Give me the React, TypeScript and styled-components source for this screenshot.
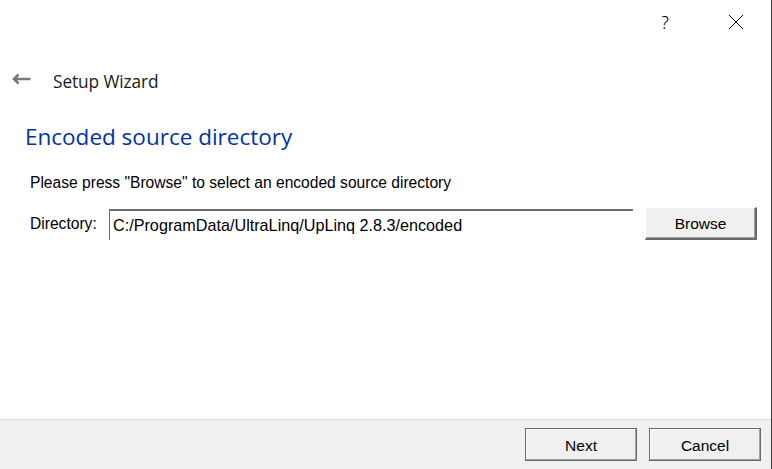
import { useState } from "react";
import styled, { createGlobalStyle } from "styled-components";

const GlobalStyle = createGlobalStyle`
  html, body {
    margin: 0;
    padding: 0;
    background: #ffffff;
  }
  * {
    box-sizing: border-box;
  }
`;

const uiFont = `"Liberation Sans", Arial, sans-serif`;

const Window = styled.div`
  width: 772px;
  height: 469px;
  display: flex;
  flex-direction: column;
  background: #ffffff;
  border-right: 1px solid #3c3c3c;
  overflow: hidden;
`;

const TitleBar = styled.div`
  height: 44px;
  display: flex;
  justify-content: flex-end;
  align-items: center;
  padding-right: 12px;
`;

const CaptionButton = styled.button<{ $gap?: number }>`
  width: 46px;
  height: 44px;
  margin-left: ${({ $gap }) => $gap ?? 0}px;
  border: none;
  background: transparent;
  display: flex;
  align-items: center;
  justify-content: center;
  padding: 0;
  font-family: "Noto Sans", sans-serif;
  font-weight: 300;
  font-size: 18px;
  color: #000000;
`;

const Header = styled.div`
  height: 70px;
  display: flex;
  align-items: center;
  padding: 4px 0 0 11px;
  gap: 22px;
`;

const ArrowBox = styled.span`
  display: flex;
  margin-bottom: 5px;
`;

const HeaderTitle = styled.span`
  font-family: "Open Sans", sans-serif;
  font-size: 17.3px;
  color: #1a1a1a;
  letter-spacing: -0.1px;
`;

const Content = styled.div`
  flex: 1;
  padding: 0 14px 0 25px;
`;

const PageTitle = styled.h1`
  margin: 0;
  font-family: "Open Sans", sans-serif;
  font-weight: 400;
  font-size: 22.5px;
  line-height: 46px;
  color: #0033a8;
`;

const Description = styled.p`
  margin: 15px 0 0 5px;
  font-family: ${uiFont};
  font-size: 15.6px;
  line-height: 16px;
  color: #000000;
`;

const FieldRow = styled.div`
  display: flex;
  align-items: center;
  margin: 16px 0 0 5px;
`;

const FieldLabel = styled.label`
  width: 79px;
  font-family: ${uiFont};
  font-size: 15.6px;
  color: #000000;
`;

const PathInput = styled.input`
  width: 524px;
  height: 31px;
  margin-top: 2px;
  border-style: solid;
  border-width: 2px 0 0 1px;
  border-color: #6d6d6d;
  padding: 0 0 0 3px;
  font-family: ${uiFont};
  font-size: 16.2px;
  color: #000000;
  background: #ffffff;
  outline: none;
`;

const ClassicButton = styled.button<{ $width?: number }>`
  width: ${({ $width }) => $width ?? 112}px;
  height: 33px;
  background: #f0f0f0;
  border-style: solid;
  border-width: 1px 2px 2px 1px;
  border-color: #ffffff #696969 #696969 #ffffff;
  box-shadow: inset -1px -1px 0 #a0a0a0;
  font-family: ${uiFont};
  font-size: 15.5px;
  color: #000000;
  padding: 2px 0 0;
`;

const BrowseButton = styled(ClassicButton)`
  margin-left: 12px;
`;

const Footer = styled.div`
  height: 50px;
  background: #f0f0f0;
  border-top: 1px solid #dfdfdf;
  display: flex;
  justify-content: flex-end;
  align-items: flex-start;
  gap: 12px;
  padding: 8px 10px 0 0;
`;

const FooterButton = styled(ClassicButton)`
  border-color: #696969;
  border-width: 1px;
  box-shadow: inset -1px -1px 0 #a0a0a0, inset 1px 1px 0 #ffffff;
`;

const BackArrow = () => (
  <svg width="20" height="12" viewBox="0 0 20 12">
    <path d="M19.5 6H3M7.5 1.5L3 6l4.5 4.5" fill="none" stroke="#7a7a7a" strokeWidth="2.6" />
  </svg>
);

const CloseIcon = () => (
  <svg width="16" height="16" viewBox="0 0 16 16">
    <path d="M1 1l14 14M15 1L1 15" fill="none" stroke="#000" strokeWidth="1" />
  </svg>
);

const App = () => {
  const [directory, setDirectory] = useState("C:/ProgramData/UltraLinq/UpLinq 2.8.3/encoded");

  return (
    <>
      <GlobalStyle />
      <Window>
        <TitleBar>
          <CaptionButton aria-label="Help">?</CaptionButton>
          <CaptionButton aria-label="Close" $gap={25}>
            <CloseIcon />
          </CaptionButton>
        </TitleBar>
        <Header>
          <ArrowBox>
            <BackArrow />
          </ArrowBox>
          <HeaderTitle>Setup Wizard</HeaderTitle>
        </Header>
        <Content>
          <PageTitle>Encoded source directory</PageTitle>
          <Description>Please press "Browse" to select an encoded source directory</Description>
          <FieldRow>
            <FieldLabel>Directory:</FieldLabel>
            <PathInput value={directory} onChange={(e) => setDirectory(e.target.value)} />
            <BrowseButton>Browse</BrowseButton>
          </FieldRow>
        </Content>
        <Footer>
          <FooterButton>Next</FooterButton>
          <FooterButton>Cancel</FooterButton>
        </Footer>
      </Window>
    </>
  );
};

export default App;
